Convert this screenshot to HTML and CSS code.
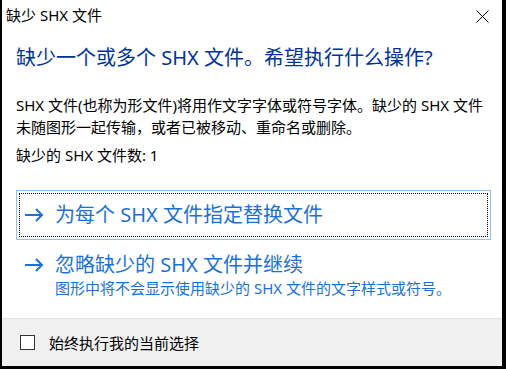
FILE: index.html
```html
<!DOCTYPE html>
<html lang="zh-CN">
<head>
    <meta charset="UTF-8">
    <title>缺少 SHX 文件</title>
    <link rel="stylesheet" href="styles.css">
</head>
<body>
    <div class="window">
        <div class="titlebar">
            <span class="title">缺少 SHX 文件</span>
            <svg class="close" width="13" height="13" viewBox="0 0 13 13">
                <path d="M0.5 0.5 L12.5 12.5 M12.5 0.5 L0.5 12.5" stroke="#000" stroke-width="1" fill="none"/>
            </svg>
        </div>

        <div class="content">
            <h1 class="main-instruction">缺少一个或多个 SHX 文件。希望执行什么操作?</h1>
            <p class="desc">SHX 文件(也称为形文件)将用作文字字体或符号字体。缺少的 SHX 文件未随图形一起传输，或者已被移动、重命名或删除。</p>
            <p class="count">缺少的 SHX 文件数: 1</p>

            <div class="command focused">
                <div class="command-inner">
                    <svg class="arrow" width="19" height="14" viewBox="0 0 19 14">
                        <path d="M0 7 H17 M11 1 L17 7 L11 13" stroke="currentColor" stroke-width="2" fill="none"/>
                    </svg>
                    <div class="command-text">
                        <div class="command-title">为每个 SHX 文件指定替换文件</div>
                    </div>
                </div>
            </div>

            <div class="command">
                <div class="command-inner">
                    <svg class="arrow" width="19" height="14" viewBox="0 0 19 14">
                        <path d="M0 7 H17 M11 1 L17 7 L11 13" stroke="currentColor" stroke-width="2" fill="none"/>
                    </svg>
                    <div class="command-text">
                        <div class="command-title">忽略缺少的 SHX 文件并继续</div>
                        <div class="command-note">图形中将不会显示使用缺少的 SHX 文件的文字样式或符号。</div>
                    </div>
                </div>
            </div>
        </div>

        <div class="footer">
            <span class="checkbox"></span>
            <span class="footer-label">始终执行我的当前选择</span>
        </div>
    </div>
</body>
</html>
```

FILE: styles.css
```css
html, body {
    margin: 0;
    padding: 0;
    background: #000;
}

body {
    font-family: "Noto Sans", "Noto Sans CJK SC", sans-serif;
    color: #000;
}

.window {
    width: 500px;
    height: 366px;
    margin-left: 2px;
    background: #fff;
    display: flex;
    flex-direction: column;
}

.titlebar {
    height: 30px;
    display: flex;
    align-items: center;
    justify-content: space-between;
    padding: 0 13px 0 4px;
}

.title {
    font-size: 15px;
    line-height: 30px;
}

.close {
    display: block;
    margin-top: 3px;
}

.content {
    flex: 1;
    padding: 0 11px 0 14px;
}

.main-instruction {
    margin: 14px 0 0;
    font-size: 20px;
    font-weight: normal;
    line-height: 28px;
    color: #003399;
}

.desc {
    margin: 22px 0 0;
    font-size: 15px;
    line-height: 22px;
}

.count {
    margin: 6px 0 0;
    font-size: 15px;
    line-height: 22px;
}

.command {
    margin-top: 24px;
    border: 1px solid transparent;
    color: #1a72d6;
}

.command + .command {
    margin-top: 0;
}

.command.focused {
    border-color: #8fc3ef;
}

.command-inner {
    margin: 2px;
    border: 1px dotted transparent;
    display: flex;
    align-items: flex-start;
    padding: 8px 0 8px 5px;
}

.focused .command-inner {
    border-color: #000;
}

.arrow {
    display: block;
    margin-top: 6px;
    flex-shrink: 0;
}

.command-text {
    margin-left: 11px;
}

.command-title {
    font-size: 20px;
    line-height: 26px;
}

.command-note {
    font-size: 15px;
    line-height: 20px;
}

.footer {
    height: 47px;
    border-top: 1px solid #dfdfdf;
    background: #f0f0f0;
    display: flex;
    align-items: center;
    padding-left: 18px;
}

.checkbox {
    width: 13px;
    height: 13px;
    border: 1px solid #333;
    background: #fff;
}

.footer-label {
    margin-left: 14px;
    font-size: 15px;
}
```
